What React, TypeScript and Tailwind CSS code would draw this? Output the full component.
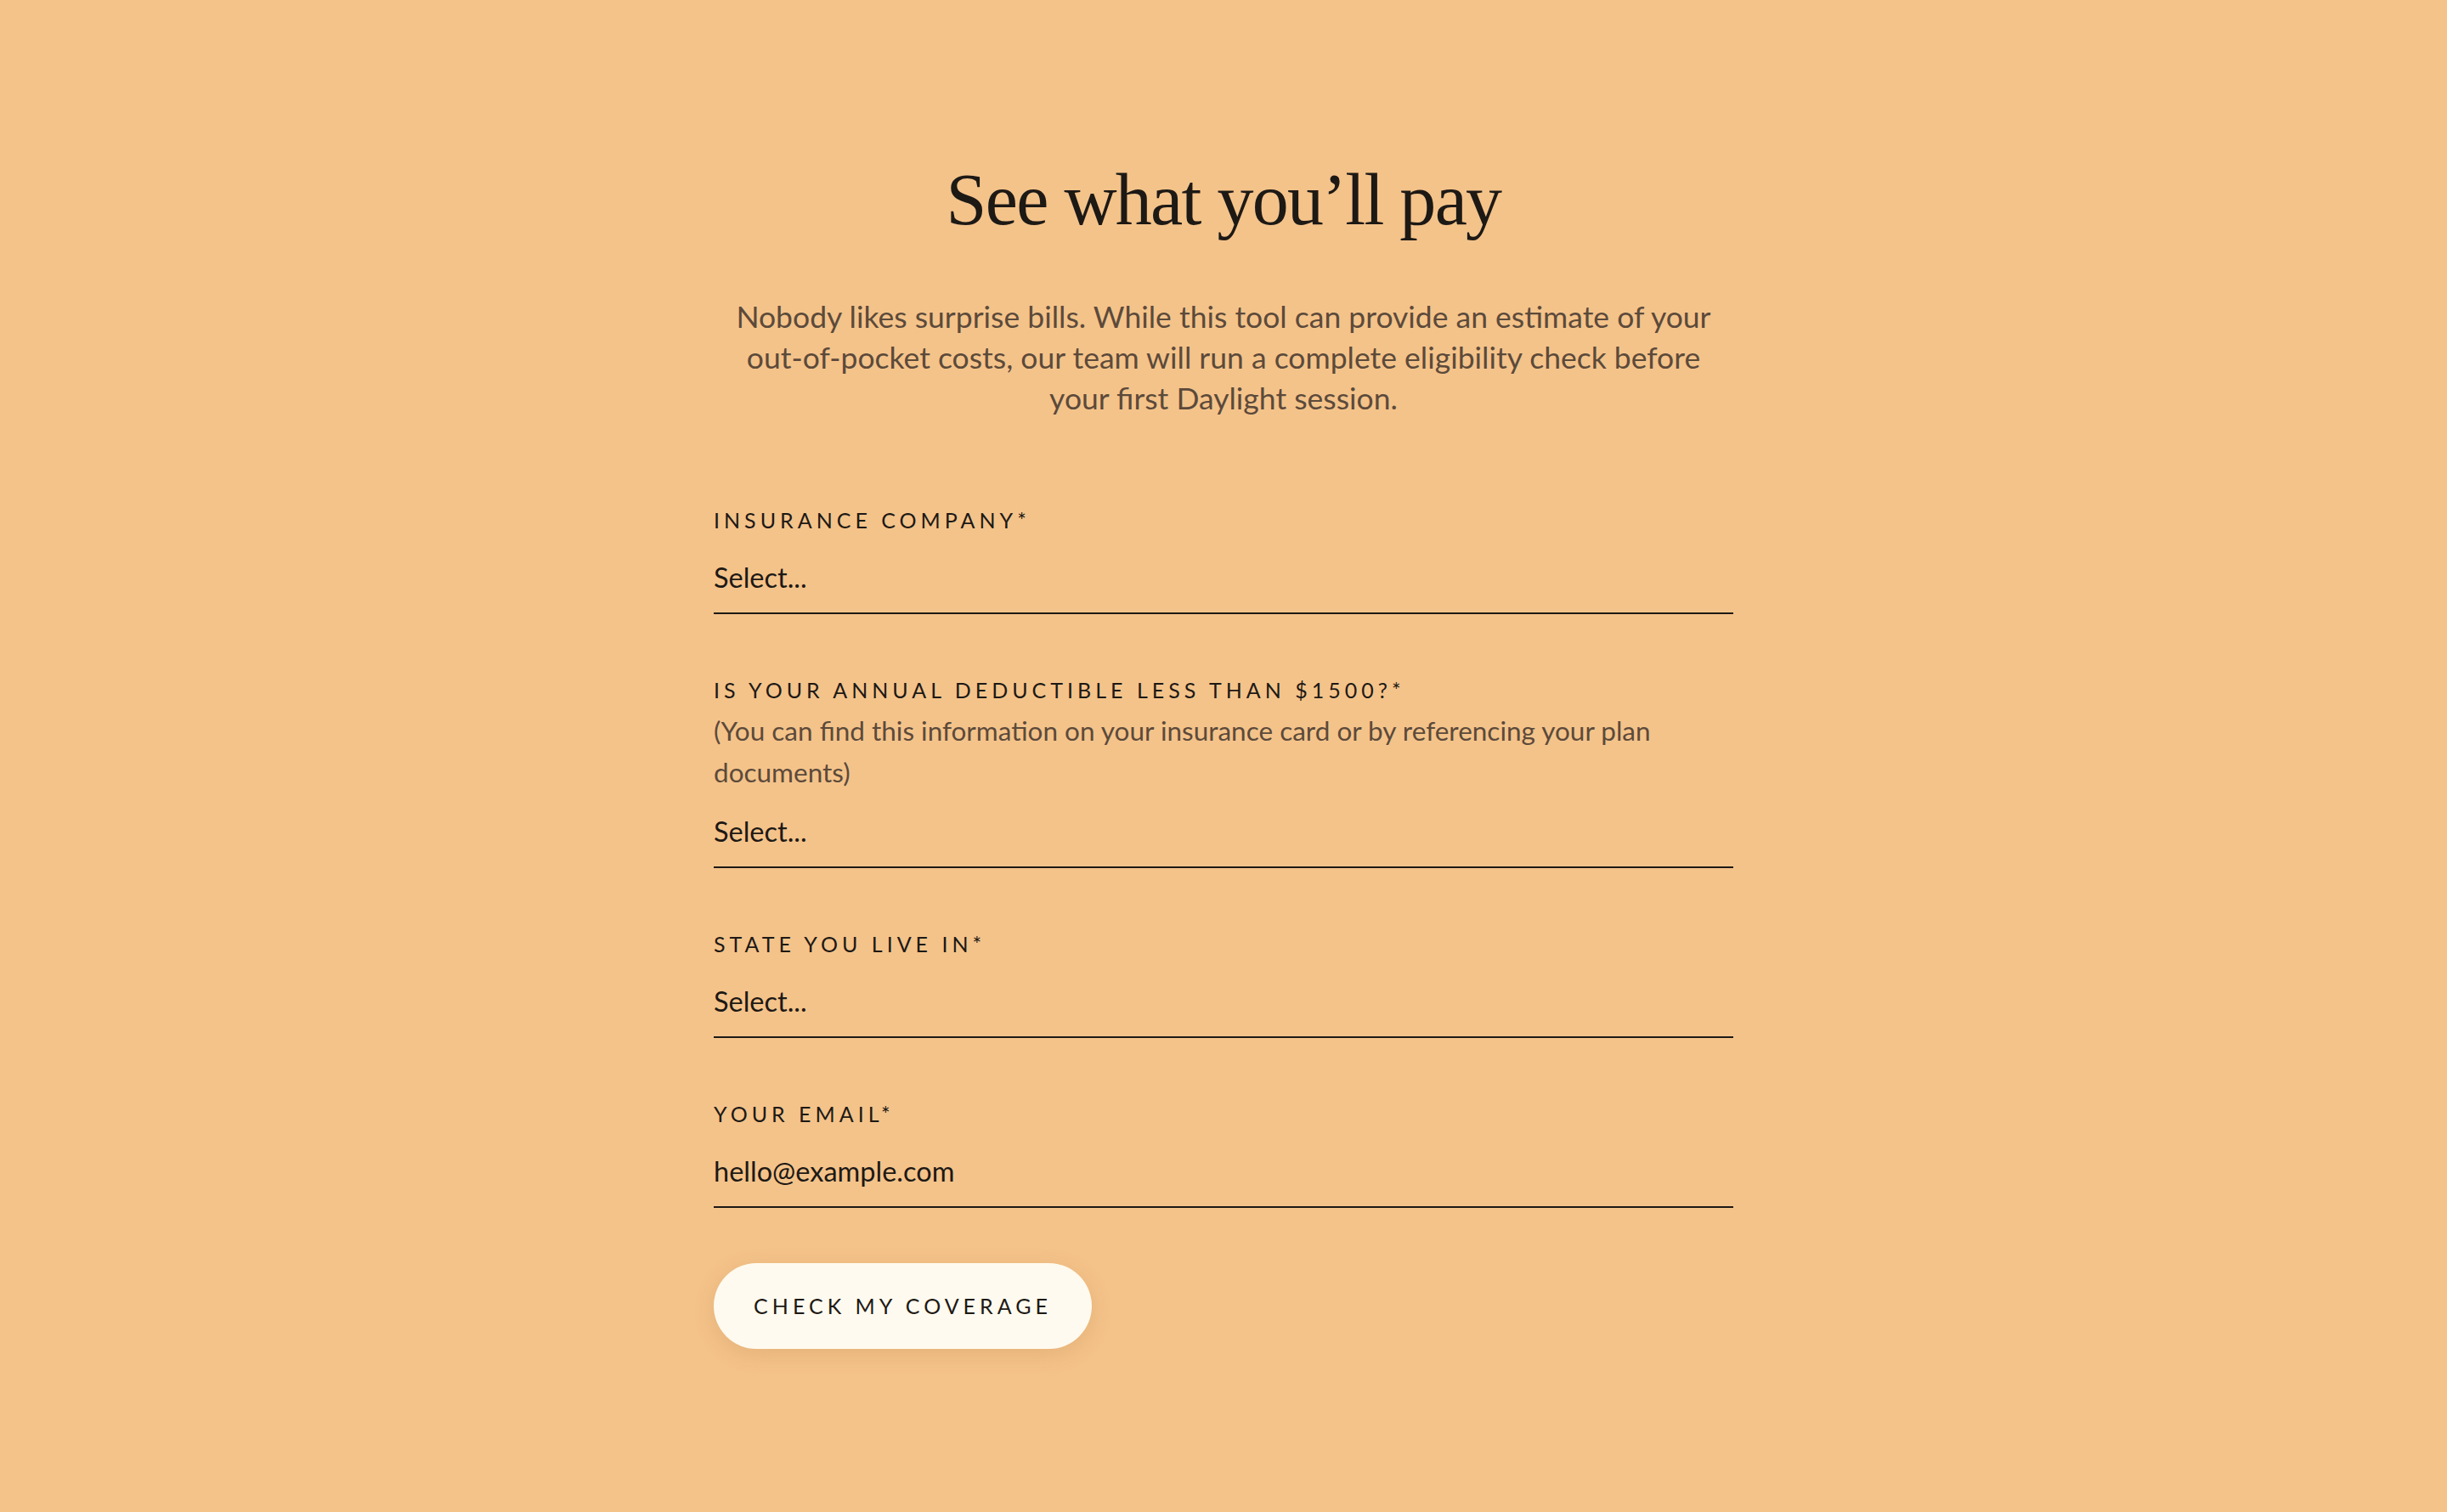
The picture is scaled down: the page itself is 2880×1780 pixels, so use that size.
import React from 'react';

const sans = "font-['Lato','Liberation_Sans',sans-serif]";

type FieldProps = {
  label: string;
  value: string;
  hint?: string;
  gapTop?: boolean;
};

function Field({ label, value, hint, gapTop }: FieldProps) {
  return (
    <div className={gapTop ? 'mt-[74px]' : ''}>
      <div className={`${sans} text-[25px] leading-[30px] tracking-[0.2em] text-[#1d1915] uppercase`}>{label}</div>
      {hint && (
        <p className={`${sans} mt-[9px] text-[31.5px] leading-[49px] text-[#5c4a3a] pr-[60px]`}>{hint}</p>
      )}
      <div
        className={`${sans} ${hint ? 'mt-[25px]' : 'mt-[33px]'} text-[32.5px] leading-[40px] text-[#1d1915] pb-[21px] border-b-2 border-[#1d1915]`}
      >
        {value}
      </div>
    </div>
  );
}

export default function App() {
  return (
    <div className="min-h-screen bg-[#f4c38a] flex justify-center">
      <div className="w-[1200px] pt-[192px] pb-[190px]">
        <h1 className="font-['Liberation_Serif',serif] text-[86px] leading-none tracking-[-0.02em] text-[#1d1915] text-center">
          See what you’ll pay
        </h1>
        <p className={`${sans} mt-[71px] text-[35.5px] leading-[48px] text-[#5c4a3a] text-center px-[10px]`}>
          Nobody likes surprise bills. While this tool can provide an estimate of your out-of-pocket costs, our team will
          run a complete eligibility check before your first Daylight session.
        </p>

        <form className="mt-[104px]" onSubmit={(e) => e.preventDefault()}>
          <Field label="Insurance company*" value="Select..." />
          <Field
            gapTop
            label="Is your annual deductible less than $1500?*"
            hint="(You can find this information on your insurance card or by referencing your plan documents)"
            value="Select..."
          />
          <Field gapTop label="State you live in*" value="Select..." />
          <Field gapTop label="Your email*" value="hello@example.com" />

          <button
            type="submit"
            className={`${sans} mt-[65px] w-[445px] h-[101px] rounded-full bg-[#fffaef] text-[25px] tracking-[0.2em] text-[#1d1915] uppercase shadow-[0_6px_24px_rgba(160,100,40,0.18)]`}
          >
            Check my coverage
          </button>
        </form>
      </div>
    </div>
  );
}
